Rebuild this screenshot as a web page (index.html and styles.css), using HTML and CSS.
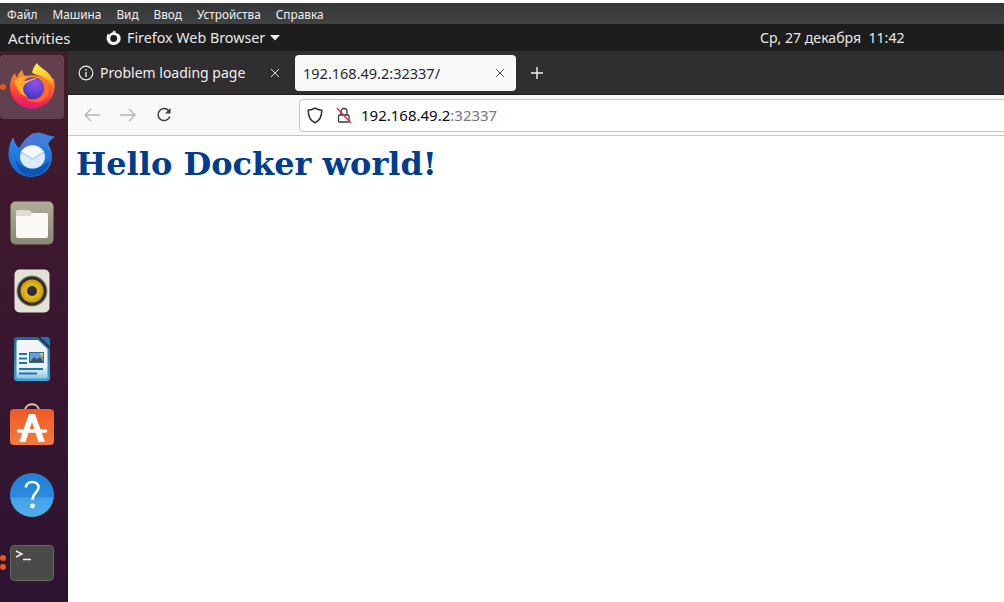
FILE: index.html
```html
<!DOCTYPE html>
<html lang="ru">
<head>
<meta charset="utf-8">
<title>Hello Docker world</title>
<link rel="stylesheet" href="styles.css">
</head>
<body>
<div class="screen">
  <div class="vm-menu">
    <span>Файл</span><span>Машина</span><span>Вид</span><span>Ввод</span><span>Устройства</span><span>Справка</span>
  </div>
  <div class="topbar">
    <span class="activities">Activities</span>
    <span class="app-name">
      <svg class="app-glyph" width="17" height="17" viewBox="0 0 17 17"><path fill="#f2f2f2" d="M8.500 1.200 C9.300 2 10.800 2.600 11.200 2.400 C10.600 3 10.400 3.400 10.600 3.900 C13.600 4 15.700 6.300 15.700 9.300 C15.700 13.200 12.600 16 8.700 16 C4.800 16 1.600 13 1.600 9.200 C1.600 7.200 2.300 5.400 3.200 4.300 C3.300 5.100 3.600 5.800 4.100 6.100 C4.900 4.600 6.200 3.700 7.600 3.300 C8.200 2.800 8.500 2 8.500 1.200 Z M8.700 6.100 A3.400 3.400 0 1 0 8.710 12.900 A3.400 3.400 0 1 0 8.700 6.100 Z" fill-rule="evenodd"/></svg>
      <span class="app-title">Firefox Web Browser</span>
      <svg class="caret" width="10" height="6" viewBox="0 0 10 6"><path fill="#eee" d="M0 0H10L5 5.500Z"/></svg>
    </span>
    <span class="clock">Ср, 27 декабря&nbsp; 11:42</span>
  </div>
  <div class="desktop">
    <nav class="dock">
      <div class="dock-item active">
        <i class="pip pip-one"></i>
        <svg width="46" height="48" viewBox="0 0 46 48">
          <defs>
            <linearGradient id="ffa" x1="0.6" y1="0" x2="0.45" y2="1"><stop offset="0" stop-color="#ff9a26"/><stop offset=".5" stop-color="#ff5a2e"/><stop offset=".8" stop-color="#f5264e"/><stop offset="1" stop-color="#e31587"/></linearGradient>
            <linearGradient id="ffb" x1="0.3" y1="0" x2="0.7" y2="1"><stop offset="0" stop-color="#fff04a"/><stop offset=".6" stop-color="#ffc12c"/><stop offset="1" stop-color="#ff8a1c"/></linearGradient>
            <radialGradient id="ffc" cx=".6" cy=".3" r=".8"><stop offset="0" stop-color="#9a4fe6"/><stop offset=".5" stop-color="#5f45dc"/><stop offset="1" stop-color="#3d2fa8"/></radialGradient>
          </defs>
          <path fill="url(#ffa)" d="M23 45.500 C10 45.500 1 35 1 24 C1 18 3 13 6 10 C6.500 12 7 13.500 8 14.500 C9 11 11 8.500 13.500 7 C13.500 9.500 14.500 12 16.500 13 C20 12 26 12 30 13 L45 16 C45.500 19 45.500 21 45.500 24 C45.500 36 35 45.500 23 45.500Z"/>
          <path fill="url(#ffb)" d="M28 0 C30 4 37 7 41 12 C44 16 45.500 20 45.500 26 C43 20 38 15.500 33 13.500 C29 12 25 11.500 23 9.500 C24 5 26 2 28 0Z"/>
          <circle cx="24" cy="25" r="11" fill="url(#ffc)"/>
          <path fill="#ffab2e" d="M5 19 C8 15 13 12.500 19 13 C16 15 14.500 16.500 14.500 18 C20 18 24 14.500 28 15 C24 17.500 17 19 15.500 22 C13 25 14 31 19 34 C13 33 8 28 8 24 C7 22 6 21 5 19Z"/>
          <path fill="#ff7a24" d="M14 34 C20 39 32 38 36 28 C36 24 35 20 33 17 C39 20 41 28 38 33 C34 41 21 41 14 34Z" opacity=".75"/>
        </svg>
      </div>
      <div class="dock-item">
        <svg width="48" height="46" viewBox="0 0 48 46">
          <defs>
            <linearGradient id="tb" x1="0" y1="0" x2="0" y2="1"><stop offset="0" stop-color="#2f8df0"/><stop offset="1" stop-color="#1166cc"/></linearGradient>
            <linearGradient id="th" x1="0" y1="0" x2="1" y2="0"><stop offset="0" stop-color="#5b6fd0"/><stop offset="1" stop-color="#2f86e0"/></linearGradient>
          </defs>
          <path fill="url(#tb)" d="M0.500 22 C0.500 16 2.500 9 5.500 5 C6 10 8 13 11 16 C14 11 17 7 20 5 C23 1 29 0 33 1 C37 2 40 4 47 5 C43 7 41 9 40 12 C43 17 44 20 44 25 C44 36 35 45 23 45 C11 45 0.500 35 0.500 22Z"/>
          <path fill="url(#th)" d="M19 6 C23 1 29 0 33 1 C37 2 40 4 47 5 C43 7 41 9 40 12 C41 14 42 16 42.500 18 C38 14 32 12 25 13 C21 14 16 16 13 19 C14 13 16 9 19 6Z"/>
          <path fill="#0d57b4" d="M7 27 C12 38 30 41 42 28 C40 39 30 44 23 44 C15 44 9 36 7 27Z"/>
          <ellipse cx="24.500" cy="25" rx="12.500" ry="11.500" fill="#dcebfa"/>
          <path fill="#f4f8fd" d="M13 20 C16 15 20 13.500 24.500 13.500 C29 13.500 33 15 36 20 L24.500 27Z"/>
          <path fill="none" stroke="#a9c5e8" stroke-width="1.200" d="M13 20 L24.500 27 L36 20"/>
        </svg>
      </div>
      <div class="dock-item">
        <svg width="44" height="44" viewBox="0 0 44 44">
          <defs><linearGradient id="fo" x1="0" y1="0" x2="0" y2="1"><stop offset="0" stop-color="#b3ac9a"/><stop offset="1" stop-color="#8c8675"/></linearGradient></defs>
          <rect x=".5" y=".5" width="43" height="43" rx="5" fill="url(#fo)"/>
          <path fill="#dedbd2" d="M6 11 Q6 9 8 9 H19 L23 12 H36 Q38 12 38 14 V20 H6Z"/>
          <path fill="#faf9f6" d="M6 15 H20 L23 12 H36 Q38 12 38 14 V35 Q38 37 36 37 H8 Q6 37 6 35Z"/>
        </svg>
      </div>
      <div class="dock-item">
        <svg width="36" height="44" viewBox="0 0 36 44">
          <defs><radialGradient id="rb" cx=".5" cy=".5" r=".5"><stop offset="0" stop-color="#f8d93a"/><stop offset="1" stop-color="#d09b06"/></radialGradient></defs>
          <rect x=".5" y=".5" width="35" height="43" rx="5" fill="#e4e1d6"/>
          <circle cx="18" cy="22" r="15.500" fill="#8a8a86"/>
          <circle cx="18" cy="22" r="14.500" fill="#2f2f2f"/>
          <circle cx="18" cy="22" r="11.500" fill="url(#rb)"/>
          <circle cx="18" cy="22" r="5" fill="#2d2d2d"/>
        </svg>
      </div>
      <div class="dock-item">
        <svg width="38" height="46" viewBox="0 0 38 46">
          <defs>
            <linearGradient id="lo" x1="0" y1="0" x2="0" y2="1"><stop offset="0" stop-color="#196a9c"/><stop offset="1" stop-color="#3ea3d8"/></linearGradient>
            <linearGradient id="lp" x1="0" y1="0" x2="0" y2="1"><stop offset="0" stop-color="#f4f6f9"/><stop offset=".7" stop-color="#eef3f8"/><stop offset="1" stop-color="#8cc6e6"/></linearGradient>
          </defs>
          <path fill="url(#lo)" d="M4 1 H25 L37 13 V42 Q37 45 34 45 H4 Q1 45 1 42 V4 Q1 1 4 1Z"/>
          <path fill="url(#lp)" d="M5 4 H25 L34.500 13 V41 Q34.500 42.500 33 42.500 H5 Q3.500 42.500 3.500 41 V5.500 Q3.500 4 5 4Z"/>
          <path fill="#1c77ad" d="M27 1 H34 Q37 1 37 4 V11Z"/>
          <path fill="#1c77ad" d="M6 17 H14 V19 H6Z M6 21.500 H14 V23.500 H6Z M6 26 H14 V28 H6Z M6 32 H30 V34 H6Z M6 36.500 H24 V38.500 H6Z"/>
          <rect x="16.500" y="16.500" width="14" height="10" fill="#5ea2d4" stroke="#33698d"/>
          <path fill="#4d4d4d" d="M17 26 L21 21 L24 23.500 L27 21 L30 26Z"/>
          <path fill="#f8cf3d" d="M26 17 H30 V21Z"/>
        </svg>
      </div>
      <div class="dock-item">
        <svg width="44" height="48" viewBox="0 0 44 48">
          <defs><linearGradient id="sw" x1="0" y1="0" x2="0" y2="1"><stop offset="0" stop-color="#ef5a25"/><stop offset="1" stop-color="#f47b3d"/></linearGradient></defs>
          <path fill="none" stroke="#e9c9a6" stroke-width="1.800" d="M15 8 C15 -1 29 -1 29 8"/>
          <rect y="6" width="44" height="36" rx="4" fill="url(#sw)"/>
          <path fill="#fff" d="M19 11 H25 L35 39 H28.500 L22 19 L15.500 39 H9Z"/>
          <path fill="none" stroke="#fff" stroke-width="3.600" stroke-linecap="round" d="M8.500 28 H35.500"/>
        </svg>
      </div>
      <div class="dock-item">
        <svg width="44" height="44" viewBox="0 0 44 44">
          <defs><linearGradient id="hp" x1="0" y1="0" x2="0" y2="1"><stop offset="0" stop-color="#1f82d8"/><stop offset=".55" stop-color="#2a8ade"/><stop offset=".56" stop-color="#43a1e8"/><stop offset="1" stop-color="#52aeea"/></linearGradient></defs>
          <circle cx="22" cy="22" r="22" fill="url(#hp)"/>
          <path fill="none" stroke="#fff" stroke-width="2.500" d="M16 14.500 C16 7 28.500 7 28.500 14.500 C28.500 19.500 22.500 20 22.500 27"/>
          <circle cx="22.500" cy="33" r="2.400" fill="#fff"/>
        </svg>
      </div>
      <div class="dock-item">
        <i class="pip pip-two"></i><i class="pip pip-three"></i>
        <svg width="44" height="36" viewBox="0 0 44 36">
          <rect x=".5" y=".5" width="43" height="35" rx="4" fill="#4a4a48" stroke="#6a6a68"/>
          <path fill="none" stroke="#f2f2f2" stroke-width="1.400" d="M6 6 L12 9 L6 12"/>
          <path stroke="#f2f2f2" stroke-width="1.500" d="M13 14.500 H21"/>
        </svg>
      </div>
    </nav>
    <main class="browser">
      <div class="tabbar">
        <div class="tab">
          <svg width="16" height="16" viewBox="0 0 16 16"><circle cx="8" cy="8" r="6.800" fill="none" stroke="#eee" stroke-width="1.200"/><path stroke="#eee" stroke-width="1.300" d="M8 7V12"/><circle cx="8" cy="4.800" r=".9" fill="#eee"/></svg>
          <span class="tab-title tab-title-error">Problem loading page</span>
          <svg class="tab-close" width="10" height="10" viewBox="0 0 10 10"><path stroke="#ddd" stroke-width="1" d="M1 1L9 9M9 1L1 9"/></svg>
        </div>
        <div class="tab tab-active">
          <span class="tab-title">192.168.49.2:32337/</span>
          <svg class="tab-close" width="10" height="10" viewBox="0 0 10 10"><path stroke="#555" stroke-width="1" d="M1 1L9 9M9 1L1 9"/></svg>
        </div>
        <svg class="new-tab" width="14" height="14" viewBox="0 0 14 14"><path stroke="#f2f2f2" stroke-width="1.400" d="M7 1V13M1 7H13"/></svg>
      </div>
      <div class="toolbar">
        <svg width="16" height="14" viewBox="0 0 16 14"><path fill="none" stroke="#b4b4b6" stroke-width="1.300" d="M16 7H1.500M7 1L1 7L7 13"/></svg>
        <svg width="16" height="14" viewBox="0 0 16 14"><path fill="none" stroke="#b4b4b6" stroke-width="1.300" d="M0 7H14.500M9 1L15 7L9 13"/></svg>
        <svg width="16" height="16" viewBox="0 0 16 16"><path fill="none" stroke="#3a3a3c" stroke-width="1.500" d="M13.800 9.500A6 6 0 1 1 12.500 3.500"/><path fill="#3a3a3c" d="M14.500 1V6.500H9Z"/></svg>
        <div class="urlbar">
          <svg width="16" height="17" viewBox="0 0 16 17"><path fill="none" stroke="#2b2b2d" stroke-width="1.500" d="M8 1.200C10 2.400 12.500 3 14.800 3.200C14.800 9 13 13.500 8 15.800C3 13.500 1.200 9 1.200 3.200C3.500 3 6 2.400 8 1.200Z"/></svg>
          <svg class="lock" width="16" height="17" viewBox="0 0 16 17"><path fill="none" stroke="#3a3a3c" stroke-width="1.300" d="M5 8V4.500A3 3 0 0 1 11 4.500V8M2.500 9Q2.500 8 3.500 8H12Q13 8 13 9V14Q13 15 12 15H3.500Q2.500 15 2.500 14Z"/><path stroke="#e2204a" stroke-width="1.300" d="M1 1L15 16"/></svg>
          <span class="url"><span class="url-host">192.168.49.2</span><span class="url-port">:32337</span></span>
        </div>
      </div>
      <div class="page">
        <h1>Hello Docker world!</h1>
      </div>
    </main>
  </div>
</div>
</body>
</html>
```
FILE: styles.css
```css
* { box-sizing: border-box; }
html, body { margin: 0; height: 100%; background: #fff; overflow: hidden; }
body { padding-top: 3px; font-family: "Noto Sans", "Open Sans", sans-serif; }
.screen { height: 599px; display: flex; flex-direction: column; }
.vm-menu {
  height: 21px; flex: none; display: flex; align-items: center; gap: 15px; padding-left: 7px;
  background: linear-gradient(#343638, #414244); color: #f0f0f0; font-size: 11.800px; white-space: nowrap;
}
.topbar {
  height: 27px; flex: none; display: flex; align-items: center; padding-left: 8px;
  background: #1d1d1d; color: #e9e9e9; font-size: 14.300px; white-space: nowrap;
}
.activities { width: 97px; font-size: 15px; }
.app-name { display: flex; align-items: center; gap: 5px; width: 655px; }
.clock { font-size: 14.100px; }
.desktop { flex: 1; display: flex; min-height: 0; }
.dock {
  width: 68px; flex: none; display: flex; flex-direction: column; padding-top: 2px;
  background: linear-gradient(#441b2b, #3a1730 50%, #2d1430);
}
.dock-item { position: relative; height: 68px; flex: none; display: flex; align-items: center; justify-content: center; width: 64px; }
.dock-item.active { background: rgba(255, 255, 255, .17); border-radius: 4px; height: 64px; margin: 2px 0; }
.pip { position: absolute; left: 0; width: 6px; height: 6px; border-radius: 50%; background: #e95420; }
.pip-one { top: 29px; }
.pip-two { top: 26px; }
.pip-three { top: 35px; }
.browser { flex: 1; display: flex; flex-direction: column; min-width: 0; background: #fff; }
.tabbar {
  height: 44px; flex: none; display: flex; align-items: center; padding: 0 0 0 2px;
  background: #302e30; border-bottom: 1px solid #1d1d1d; color: #f0f0f0; font-size: 14.500px;
}
.tab { width: 221px; height: 36px; flex: none; display: flex; align-items: center; padding: 0 11px 0 8px; gap: 6px; border-radius: 4px; }
.tab-active { background: #f9f9fa; color: #2a2a2e; margin-left: 4px; }
.tab-title { flex: 1; white-space: nowrap; }
.tab-title-error { font-size: 14px; }
.new-tab { margin-left: 14px; }
.toolbar {
  height: 41px; flex: none; display: flex; align-items: center; gap: 20px; padding-left: 16px;
  background: #f9f9fa; border-bottom: 1px solid #c8c8c8;
}
.urlbar {
  flex: 1; height: 33px; margin-left: 107px; margin-right: -4px; display: flex; align-items: center; padding-left: 7px;
  background: #fff; border: 1px solid #c4c4c4; border-radius: 4px; color: #0c0c0d; font-size: 15px;
}
.lock { margin: 0 9px 0 13px; }
.url-port { color: #77777b; }
.page { flex: 1; padding: 8px; }
h1 { margin: 0; font: bold 32px/40px "DejaVu Serif", serif; color: #003d8f; }
```
